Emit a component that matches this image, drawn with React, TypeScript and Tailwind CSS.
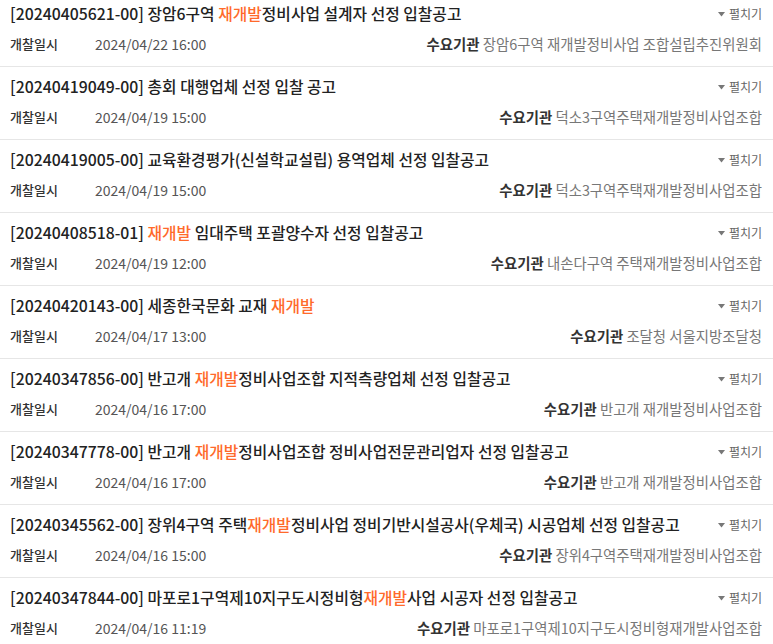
import React from "react";

type Item = { no: string; title: (string | { h: string })[]; date: string; org: string };

const H = "재개발";

const items: Item[] = [
  { no: "20240405621-00", title: ["장암6구역 ", { h: H }, "정비사업 설계자 선정 입찰공고"], date: "2024/04/22 16:00", org: "장암6구역 재개발정비사업 조합설립추진위원회" },
  { no: "20240419049-00", title: ["총회 대행업체 선정 입찰 공고"], date: "2024/04/19 15:00", org: "덕소3구역주택재개발정비사업조합" },
  { no: "20240419005-00", title: ["교육환경평가(신설학교설립) 용역업체 선정 입찰공고"], date: "2024/04/19 15:00", org: "덕소3구역주택재개발정비사업조합" },
  { no: "20240408518-01", title: [{ h: H }, " 임대주택 포괄양수자 선정 입찰공고"], date: "2024/04/19 12:00", org: "내손다구역 주택재개발정비사업조합" },
  { no: "20240420143-00", title: ["세종한국문화 교재 ", { h: H }], date: "2024/04/17 13:00", org: "조달청 서울지방조달청" },
  { no: "20240347856-00", title: ["반고개 ", { h: H }, "정비사업조합 지적측량업체 선정 입찰공고"], date: "2024/04/16 17:00", org: "반고개 재개발정비사업조합" },
  { no: "20240347778-00", title: ["반고개 ", { h: H }, "정비사업조합 정비사업전문관리업자 선정 입찰공고"], date: "2024/04/16 17:00", org: "반고개 재개발정비사업조합" },
  { no: "20240345562-00", title: ["장위4구역 주택", { h: H }, "정비사업 정비기반시설공사(우체국) 시공업체 선정 입찰공고"], date: "2024/04/16 15:00", org: "장위4구역주택재개발정비사업조합" },
  { no: "20240347844-00", title: ["마포로1구역제10지구도시정비형", { h: H }, "사업 시공자 선정 입찰공고"], date: "2024/04/16 11:19", org: "마포로1구역제10지구도시정비형재개발사업조합" },
];

function Row({ item }: { item: Item }) {
  return (
    <div className="border-b border-[#e6e6e6] pt-[9px] pb-[12px] pl-[10px] pr-[11px]">
      <div className="flex h-[22px] items-center justify-between">
        <div className="text-[15.8px] font-medium text-[#222] leading-[22px] whitespace-nowrap">
          [{item.no}]{" "}
          {item.title.map((t, i) =>
            typeof t === "string" ? (
              <span key={i}>{t}</span>
            ) : (
              <span key={i} className="text-[#ff6a2b]">
                {t.h}
              </span>
            )
          )}
        </div>
        <div className="flex items-center gap-[4px] text-[12px] text-[#666]">
          <svg width="7" height="5" viewBox="0 0 7 5" className="mt-[1px]">
            <path d="M0 0 L7 0 L3.5 4.5 Z" fill="#777" />
          </svg>
          <span>펼치기</span>
        </div>
      </div>
      <div className="mt-[9px] flex h-[20px] items-center justify-between leading-[20px]">
        <div className="flex items-center">
          <span className="w-[85px] text-[13px] font-medium text-[#333]">개찰일시</span>
          <span className="text-[14px] text-[#555]">{item.date}</span>
        </div>
        <div className="whitespace-nowrap text-[14.4px]">
          <span className="font-bold text-[#333]">수요기관</span>{" "}
          <span className="text-[#777]">{item.org}</span>
        </div>
      </div>
    </div>
  );
}

export default function App() {
  return (
    <div
      className="h-[644px] w-[773px] overflow-hidden bg-white"
      style={{ fontFamily: '"Noto Sans CJK KR", "Noto Sans", sans-serif' }}
    >
      <div className="-mt-[6px]">
        {items.map((it) => (
          <Row key={it.no} item={it} />
        ))}
      </div>
    </div>
  );
}
